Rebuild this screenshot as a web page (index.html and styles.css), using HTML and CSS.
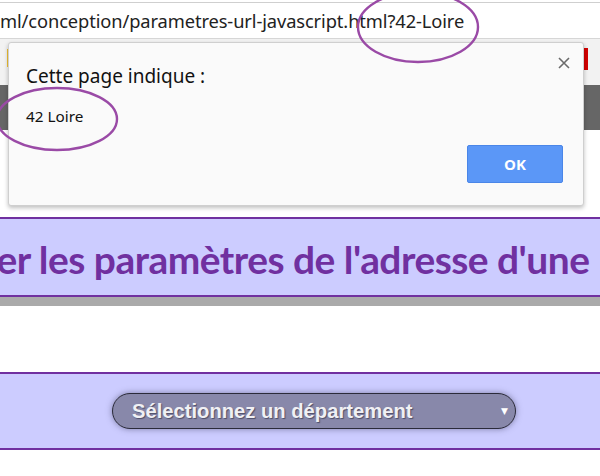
FILE: index.html
```html
<!DOCTYPE html>
<html lang="fr">
<head>
<meta charset="utf-8">
<title>Paramètres URL</title>
<link rel="stylesheet" href="styles.css">
</head>
<body>
<div class="chrome">
  <div class="address">
    <span class="url">ml/conception/parametres-url-javascript.html?42-Loire</span>
  </div>
  <div class="toolbar">
    <span class="tb-yellow"></span>
    <span class="tb-red"></span>
  </div>
</div>
<div class="page">
  <div class="page-header"></div>
  <div class="spacer-a"></div>
  <div class="banner">
    <h1 class="title">Récupérer les paramètres de l'adresse d'une page</h1>
  </div>
  <div class="spacer-b"></div>
  <div class="band">
    <div class="select">
      <span class="select-label">Sélectionnez un département</span>
      <span class="select-arrow">▼</span>
    </div>
  </div>
</div>

<div class="dialog">
  <div class="dialog-head">
    <span class="dialog-title">Cette page indique :</span>
    <span class="dialog-close">
      <svg width="12" height="12" viewBox="0 0 12 12"><path d="M1 1L11 11M11 1L1 11" stroke="#6b6b6b" stroke-width="1.6" fill="none"/></svg>
    </span>
  </div>
  <div class="dialog-msg">42 Loire</div>
  <div class="dialog-actions">
    <button class="ok">OK</button>
  </div>
</div>

<svg class="marks" width="600" height="476" viewBox="0 0 600 476">
  <ellipse cx="418" cy="27" rx="60" ry="35" fill="none" stroke="#9a4aa6" stroke-width="2.4"/>
  <ellipse cx="57" cy="119" rx="60" ry="31" fill="none" stroke="#9a4aa6" stroke-width="2.4"/>
</svg>
</body>
</html>
```

FILE: styles.css
```css
html, body {
  margin: 0;
  padding: 0;
}
body {
  width: 600px;
  height: 476px;
  overflow: hidden;
  position: relative;
  background: #fff;
  font-family: "Noto Sans", "Open Sans", sans-serif;
}

.address {
  height: 35px;
  margin-top: 2px;
  border-top: 1px solid #cfcfcf;
  border-bottom: 1px solid #d6d6d6;
  background: #fff;
  display: flex;
  align-items: center;
}
.url {
  font-family: "Noto Sans", sans-serif;
  font-size: 18.3px;
  color: #222;
  letter-spacing: -0.1px;
  white-space: nowrap;
  margin-top: -1px;
}
.toolbar {
  height: 46px;
  background: #f2f2f2;
  display: flex;
  justify-content: space-between;
  align-items: flex-start;
  padding: 9px 12px 0 7px;
  box-sizing: border-box;
}
.tb-yellow {
  width: 3px;
  height: 18px;
  background: #f2c233;
  margin-top: 1px;
}
.tb-red {
  width: 5px;
  height: 22px;
  background: #d40000;
}

.page-header {
  height: 45px;
  background: #666;
}
.spacer-a { height: 87px; }
.banner {
  height: 80px;
  background: #ccccff;
  border-top: 2px solid #7030a0;
  border-bottom: 2px solid #7030a0;
  box-shadow: 0 9px 0 #aaaaaa;
  box-sizing: border-box;
  display: flex;
  align-items: center;
  overflow: hidden;
}
.title {
  margin: 3px 0 0 -142px;
  white-space: nowrap;
  font-family: "Lato", sans-serif;
  font-weight: 700;
  font-size: 38.9px;
  color: #7030a0;
  letter-spacing: -0.5px;
}
.spacer-b { height: 75px; }
.band {
  height: 78px;
  background: #ccccff;
  border-top: 2px solid #7030a0;
  border-bottom: 2px solid #7030a0;
  box-sizing: border-box;
  display: flex;
  align-items: center;
  justify-content: center;
}
.select {
  width: 404px;
  height: 36px;
  box-sizing: border-box;
  border: 1.5px solid #2b2b3a;
  border-radius: 18px;
  background: #8888aa;
  box-shadow: 0 0 6px rgba(60, 60, 90, 0.55);
  display: flex;
  align-items: center;
  justify-content: space-between;
  padding: 0 7px 0 19px;
  margin-left: 28px;
}
.select-label {
  font-family: "Liberation Sans", Arial, sans-serif;
  font-weight: 700;
  font-size: 20.2px;
  color: #f0f0f4;
  text-shadow: 1px 1px 1px rgba(40, 40, 60, 0.6);
}
.select-arrow {
  font-family: "DejaVu Sans", sans-serif;
  font-size: 9px;
  color: #fff;
}

.dialog {
  position: absolute;
  left: 8px;
  top: 42px;
  width: 576px;
  height: 164px;
  box-sizing: border-box;
  background: #fafafa;
  border: 1px solid #cfcfcf;
  border-radius: 3px;
  box-shadow: 0 2px 4px rgba(0, 0, 0, 0.25);
  padding: 20px 13px 0 17px;
  display: flex;
  flex-direction: column;
}
.dialog-head {
  display: flex;
  justify-content: space-between;
  align-items: flex-start;
}
.dialog-title {
  font-size: 19px;
  color: #111;
  line-height: 26px;
}
.dialog-close {
  margin-top: -6px;
  line-height: 0;
}
.dialog-msg {
  margin-top: 17px;
  font-size: 15.3px;
  color: #111;
  line-height: 20px;
}
.dialog-actions {
  display: flex;
  justify-content: flex-end;
  margin-top: 19px;
  padding-right: 7px;
}
.ok {
  width: 96px;
  height: 38px;
  background: #5b97f7;
  border: 1px solid #4a86e8;
  border-radius: 2px;
  color: #fff;
  font-family: "Open Sans", sans-serif;
  font-weight: 700;
  font-size: 15px;
  padding: 0;
}

.marks {
  position: absolute;
  left: 0;
  top: 0;
  pointer-events: none;
}
```
